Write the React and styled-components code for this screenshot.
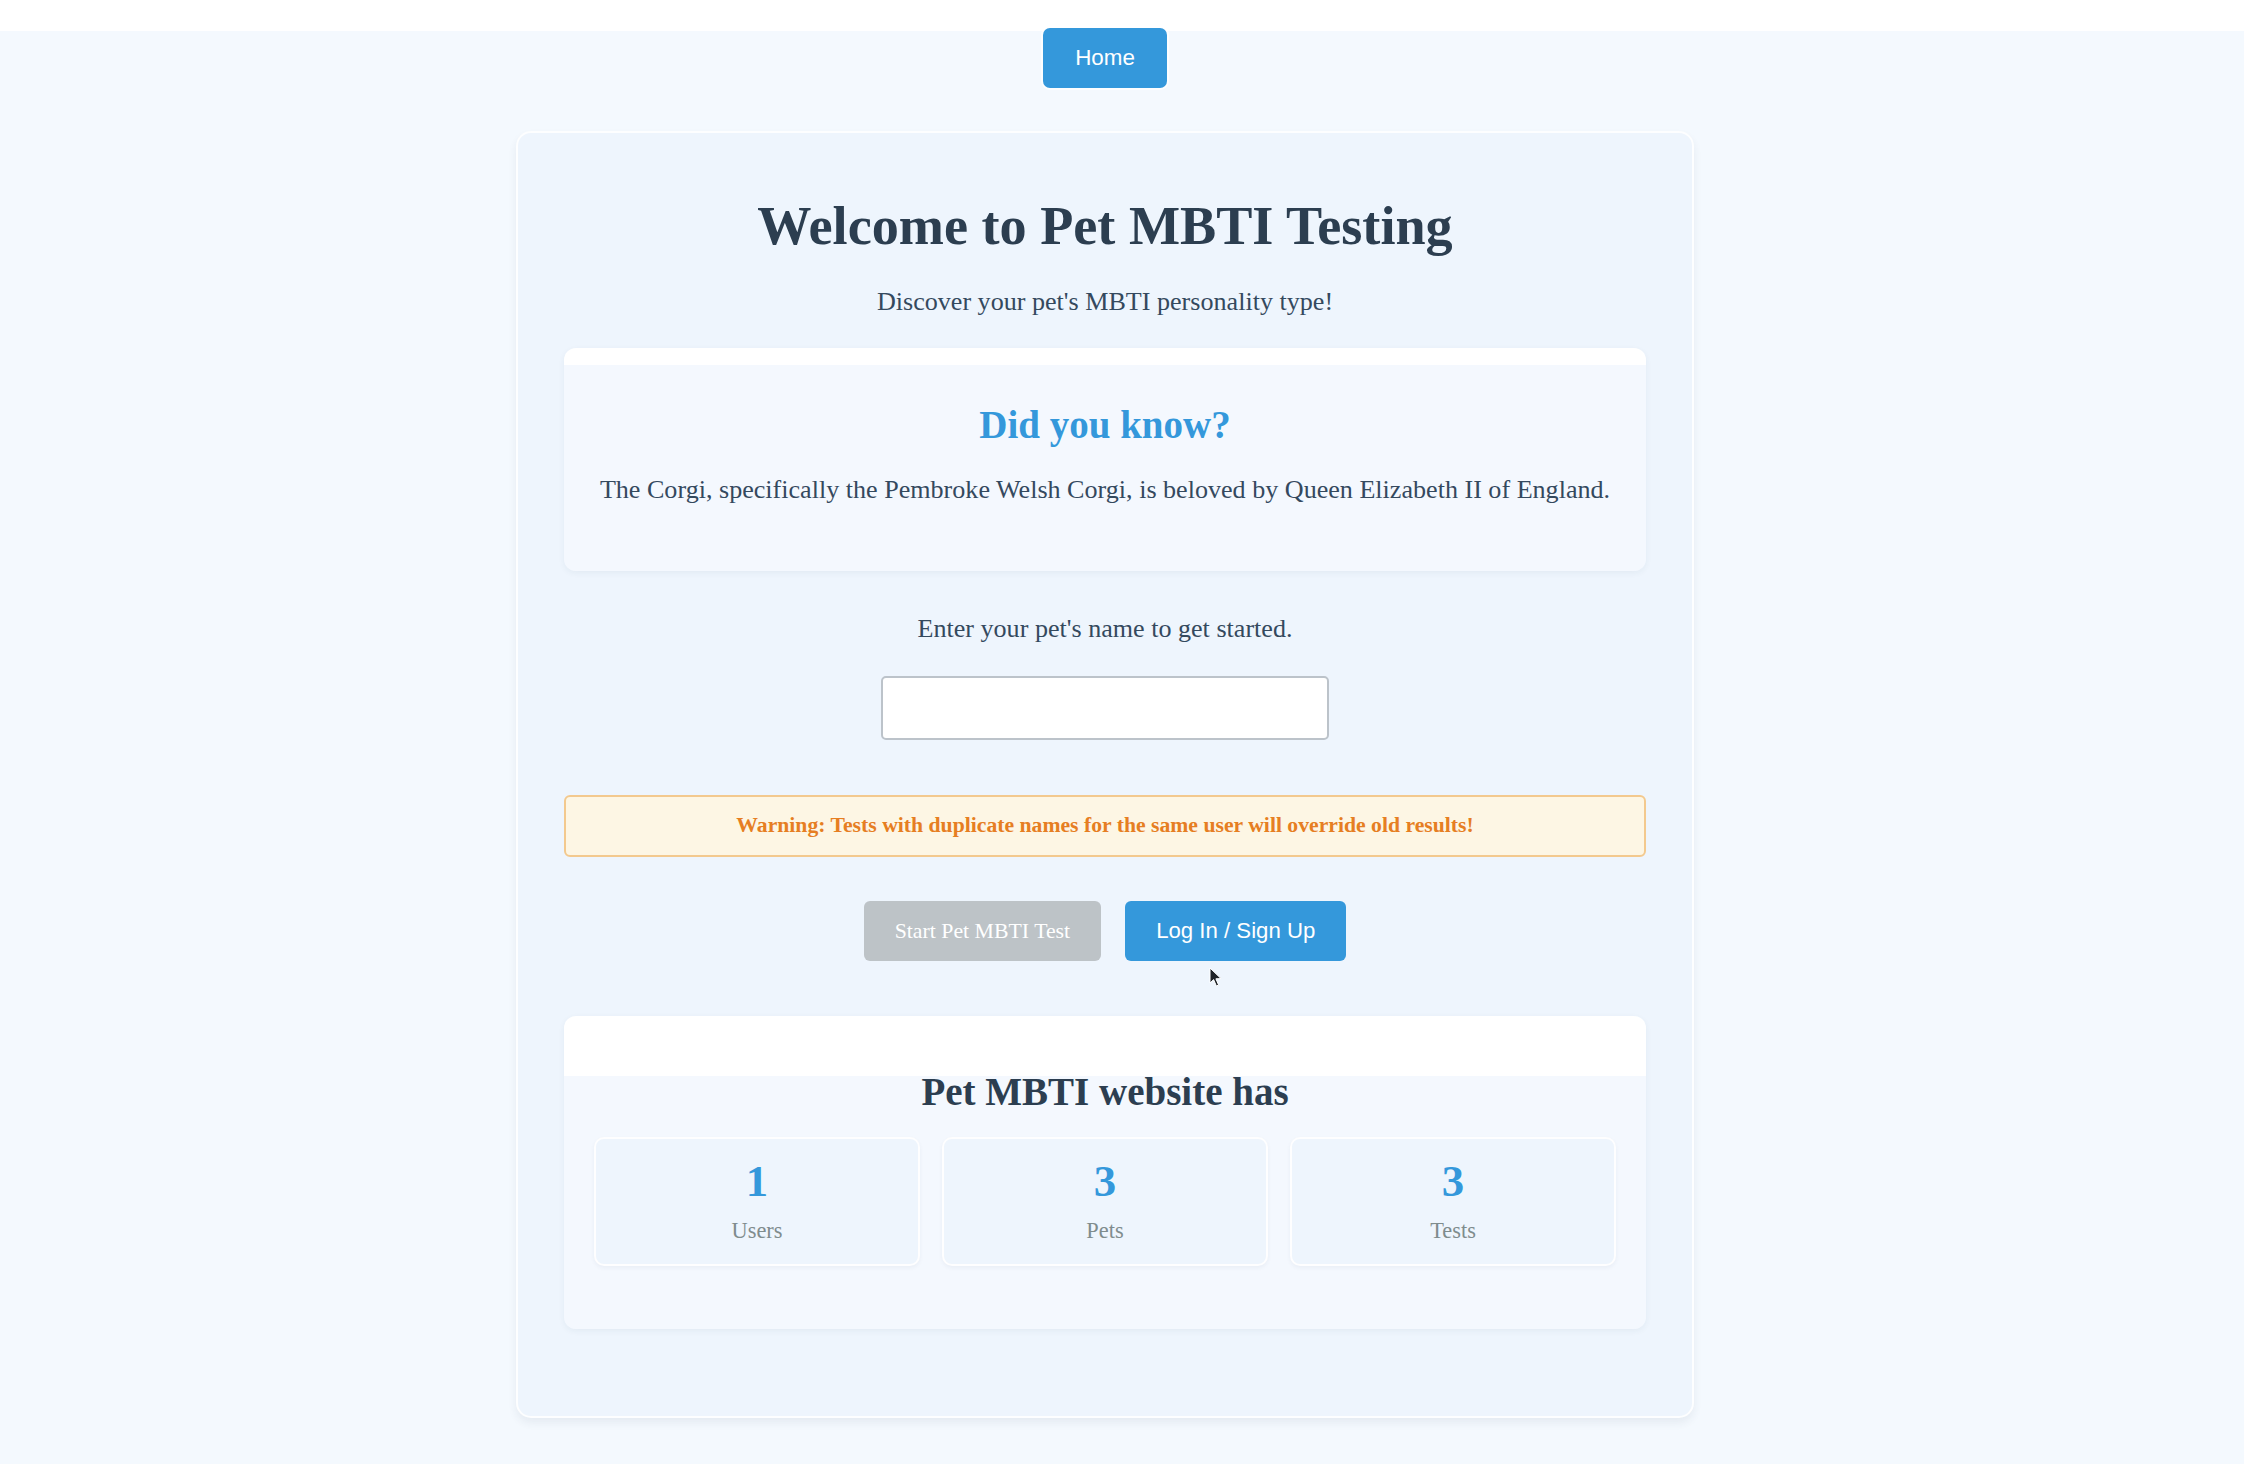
import React from 'react';
import styled, { createGlobalStyle } from 'styled-components';

const GlobalStyle = createGlobalStyle`
  html, body {
    margin: 0;
    padding: 0;
  }
  body {
    background: #f4f9fe;
    font-family: "Liberation Serif", "Times New Roman", serif;
    color: #2c3e50;
  }
  * {
    box-sizing: border-box;
  }
`;

const Page = styled.div`
  min-height: 100vh;
  padding: 28px 34px 40px 0;
  background: linear-gradient(#ffffff 0 31px, #f4f9fe 31px);
  display: flex;
  flex-direction: column;
  align-items: center;
`;

const Nav = styled.nav`
  display: flex;
  justify-content: center;
`;

const NavButton = styled.a`
  display: flex;
  align-items: center;
  height: 60px;
  padding: 0 32px;
  border-radius: 7px;
  background: #3498db;
  color: #fff;
  font-family: "Liberation Sans", Arial, sans-serif;
  font-size: 22.4px;
  text-decoration: none;
  box-shadow: 0 0 0 2px rgba(255, 255, 255, 0.8);
`;

const MainCard = styled.main`
  width: 1178px;
  margin-top: 43px;
  padding: 62px 46px 87px;
  background: #eef5fd;
  border: 2px solid rgba(255, 255, 255, 0.85);
  border-radius: 15px;
  box-shadow: 0 5px 8px rgba(40, 60, 90, 0.07);
  display: flex;
  flex-direction: column;
  align-items: stretch;
  text-align: center;
`;

const Title = styled.h1`
  margin: 0;
  font-size: 54.2px;
  line-height: 1.15;
  font-weight: bold;
  color: #2c3e50;
`;

const Text = styled.p`
  margin: ${(p) => p.$mt || 0}px 0 0;
  font-size: 26.1px;
  line-height: 1.15;
  color: #34495e;
`;

const InfoCard = styled.section`
  margin-top: ${(p) => p.$mt}px;
  padding: ${(p) => p.$pt}px 30px ${(p) => p.$pb}px;
  border-radius: 12px;
  background: linear-gradient(#ffffff 0 ${(p) => p.$band}px, #f4f8fe ${(p) => p.$band}px);
  box-shadow: 0 2px 6px rgba(40, 60, 90, 0.06);
`;

const CardTitle = styled.h2`
  margin: 0;
  font-size: 39px;
  line-height: 1.15;
  font-weight: bold;
  color: ${(p) => (p.$accent ? '#3498db' : '#2c3e50')};
`;

const NameInput = styled.input`
  align-self: center;
  width: 448px;
  height: 64px;
  margin-top: 32px;
  border: 2px solid #bcc3ca;
  border-radius: 5px;
  background: #fff;
  font-size: 22px;
  padding: 0 14px;
  outline: none;
`;

const Warning = styled.div`
  margin-top: 55px;
  padding: 16px 20px 17px;
  border: 2px solid #f3c98e;
  border-radius: 6px;
  background: #fdf6e4;
  color: #e67e22;
  font-size: 21.7px;
  line-height: 1.15;
  font-weight: bold;
`;

const ButtonRow = styled.div`
  margin-top: 44px;
  display: flex;
  justify-content: center;
  gap: 24px;
`;

const Button = styled.button`
  height: 60px;
  padding: 0 31px;
  border: none;
  border-radius: 6px;
  background: ${(p) => (p.disabled ? '#bdc3c7' : '#3498db')};
  color: #fff;
  font-family: ${(p) =>
    p.$sans ? '"Liberation Sans", Arial, sans-serif' : '"Liberation Serif", "Times New Roman", serif'};
  font-size: ${(p) => (p.$sans ? 22.2 : 21.8)}px;
  cursor: ${(p) => (p.disabled ? 'default' : 'pointer')};
`;

const PointerSpot = styled.div`
  position: relative;
`;

const Cursor = styled.svg`
  position: absolute;
  left: 84px;
  top: 66px;
  width: 14px;
  height: 21px;
  pointer-events: none;
`;

const StatGrid = styled.div`
  margin-top: 22px;
  display: grid;
  grid-template-columns: repeat(3, 1fr);
  gap: 22px;
`;

const StatBox = styled.div`
  padding: 17px 10px 20px;
  border: 2px solid rgba(255, 255, 255, 0.9);
  border-radius: 10px;
  background: #eef5fd;
  box-shadow: 0 2px 4px rgba(40, 60, 90, 0.05);
`;

const StatNumber = styled.div`
  font-size: 44.8px;
  line-height: 1.15;
  font-weight: bold;
  color: #3498db;
`;

const StatLabel = styled.div`
  margin-top: 11px;
  font-size: 22.4px;
  line-height: 1.15;
  color: #7f8c8d;
`;

const stats = [
  { value: 1, label: 'Users' },
  { value: 3, label: 'Pets' },
  { value: 3, label: 'Tests' },
];

export default function App() {
  return (
    <>
      <GlobalStyle />
      <Page>
        <Nav>
          <NavButton href="#">Home</NavButton>
        </Nav>

        <MainCard>
          <Title>Welcome to Pet MBTI Testing</Title>
          <Text $mt={30}>Discover your pet's MBTI personality type!</Text>

          <InfoCard $mt={31} $pt={55} $pb={66} $band={17}>
            <CardTitle $accent>Did you know?</CardTitle>
            <Text $mt={27}>
              The Corgi, specifically the Pembroke Welsh Corgi, is beloved by Queen Elizabeth II of England.
            </Text>
          </InfoCard>

          <Text $mt={43}>Enter your pet's name to get started.</Text>
          <NameInput type="text" />

          <Warning>Warning: Tests with duplicate names for the same user will override old results!</Warning>

          <ButtonRow>
            <Button disabled>Start Pet MBTI Test</Button>
            <PointerSpot>
              <Button $sans>Log In / Sign Up</Button>
              <Cursor viewBox="0 0 14 21">
                <path d="M1 1 L1 16 L4.6 12.6 L7.4 19 L9.6 18 L6.9 11.8 L12 11.6 Z" fill="#1f2328" stroke="#fff" strokeWidth="1" />
              </Cursor>
            </PointerSpot>
          </ButtonRow>

          <InfoCard $mt={55} $pt={54} $pb={63} $band={60}>
            <CardTitle>Pet MBTI website has</CardTitle>
            <StatGrid>
              {stats.map((s) => (
                <StatBox key={s.label}>
                  <StatNumber>{s.value}</StatNumber>
                  <StatLabel>{s.label}</StatLabel>
                </StatBox>
              ))}
            </StatGrid>
          </InfoCard>
        </MainCard>
      </Page>
    </>
  );
}
